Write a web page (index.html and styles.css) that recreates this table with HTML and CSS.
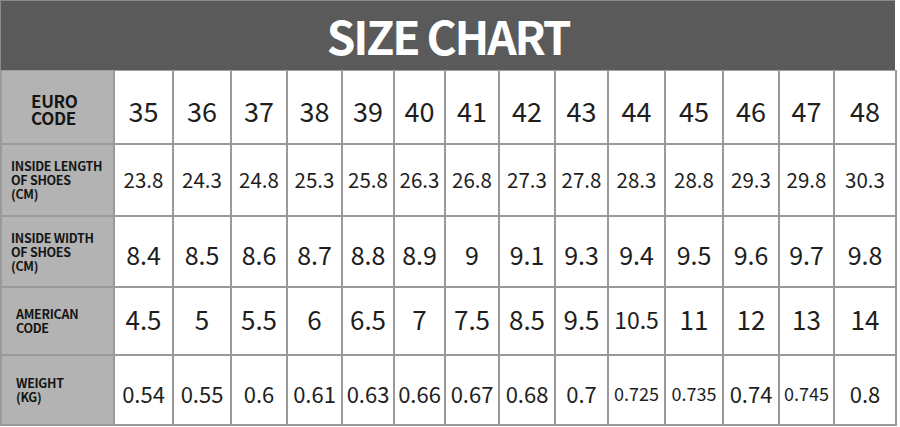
FILE: index.html
```html
<!DOCTYPE html>
<html>
<head>
<meta charset="utf-8">
<link rel="stylesheet" href="styles.css">
</head>
<body>
<div class="chart">
  <div class="title">SIZE CHART</div>
  <div class="grid">
    <div class="label euro">EURO<br>CODE</div>
    <div class="cell r1">35</div><div class="cell r1">36</div><div class="cell r1">37</div><div class="cell r1">38</div><div class="cell r1">39</div><div class="cell r1">40</div><div class="cell r1">41</div><div class="cell r1">42</div><div class="cell r1">43</div><div class="cell r1">44</div><div class="cell r1">45</div><div class="cell r1">46</div><div class="cell r1">47</div><div class="cell r1">48</div>

    <div class="label small">INSIDE LENGTH<br>OF SHOES<br>(CM)</div>
    <div class="cell r2">23.8</div><div class="cell r2">24.3</div><div class="cell r2">24.8</div><div class="cell r2">25.3</div><div class="cell r2">25.8</div><div class="cell r2">26.3</div><div class="cell r2">26.8</div><div class="cell r2">27.3</div><div class="cell r2">27.8</div><div class="cell r2">28.3</div><div class="cell r2">28.8</div><div class="cell r2">29.3</div><div class="cell r2">29.8</div><div class="cell r2">30.3</div>

    <div class="label small">INSIDE WIDTH<br>OF SHOES<br>(CM)</div>
    <div class="cell r3">8.4</div><div class="cell r3">8.5</div><div class="cell r3">8.6</div><div class="cell r3">8.7</div><div class="cell r3">8.8</div><div class="cell r3">8.9</div><div class="cell r3">9</div><div class="cell r3">9.1</div><div class="cell r3">9.3</div><div class="cell r3">9.4</div><div class="cell r3">9.5</div><div class="cell r3">9.6</div><div class="cell r3">9.7</div><div class="cell r3">9.8</div>

    <div class="label small indent">AMERICAN<br>CODE</div>
    <div class="cell r4">4.5</div><div class="cell r4">5</div><div class="cell r4">5.5</div><div class="cell r4">6</div><div class="cell r4">6.5</div><div class="cell r4">7</div><div class="cell r4">7.5</div><div class="cell r4">8.5</div><div class="cell r4">9.5</div><div class="cell r4 tight">10.5</div><div class="cell r4">11</div><div class="cell r4">12</div><div class="cell r4">13</div><div class="cell r4">14</div>

    <div class="label small indent">WEIGHT<br>(KG)</div>
    <div class="cell r5">0.54</div><div class="cell r5">0.55</div><div class="cell r5">0.6</div><div class="cell r5">0.61</div><div class="cell r5">0.63</div><div class="cell r5">0.66</div><div class="cell r5">0.67</div><div class="cell r5">0.68</div><div class="cell r5">0.7</div><div class="cell r5 tiny">0.725</div><div class="cell r5 tiny">0.735</div><div class="cell r5">0.74</div><div class="cell r5 tiny">0.745</div><div class="cell r5">0.8</div>
  </div>
</div>
</body>
</html>
```
FILE: styles.css
```css
html, body {
  margin: 0;
  padding: 0;
  background: #ffffff;
}

body {
  font-family: "Noto Sans CJK SC", "Source Sans Pro", "Noto Sans", sans-serif;
  color: #1e1e1e;
}

.chart {
  width: 897px;
}

.title {
  height: 70px;
  box-sizing: border-box;
  border-top: 1px solid #8a8a8a;
  border-left: 1px solid #8a8a8a;
  margin-right: 2px;
  background: #5a5a5a;
  color: #ffffff;
  font-weight: 700;
  font-size: 46px;
  letter-spacing: -2.2px;
  line-height: 68px;
  text-align: center;
}

.grid {
  display: grid;
  grid-template-columns: 113px 59px 58px 56px 55px 52px 51px 54px 56px 53px 57px 58px 56px 55px 62px;
  grid-template-rows: 74px 72px 71px 68px 70px;
  border-left: 2px solid #9a9a9a;
  border-top: 1px solid #a0a0a0;
}

.grid > div {
  border-right: 2px solid #9a9a9a;
  border-bottom: 2px solid #9a9a9a;
}

.label {
  background: #b3b3b3;
  display: flex;
  flex-direction: column;
  justify-content: center;
  color: #151515;
  font-weight: 700;
}

.euro {
  font-size: 17px;
  line-height: 17px;
  padding-left: 29px;
  padding-top: 4px;
  letter-spacing: -0.3px;
}

.small {
  font-size: 12.5px;
  line-height: 14px;
  padding-left: 9px;
  letter-spacing: -0.3px;
}

.small.indent {
  padding-left: 14px;
}

.cell {
  display: flex;
  align-items: center;
  justify-content: center;
  box-sizing: border-box;
  white-space: nowrap;
}

.r1 { font-size: 27px; padding-top: 6px; }
.r2 { font-size: 20.5px; padding-bottom: 3px; }
.r3 { font-size: 25px; padding-top: 4px; }
.r4 { font-size: 26px; padding-bottom: 5px; }
.r5 { font-size: 22px; padding-top: 5px; }
.r4.tight { font-size: 23px; }
.r5.tiny { font-size: 18px; }
```
